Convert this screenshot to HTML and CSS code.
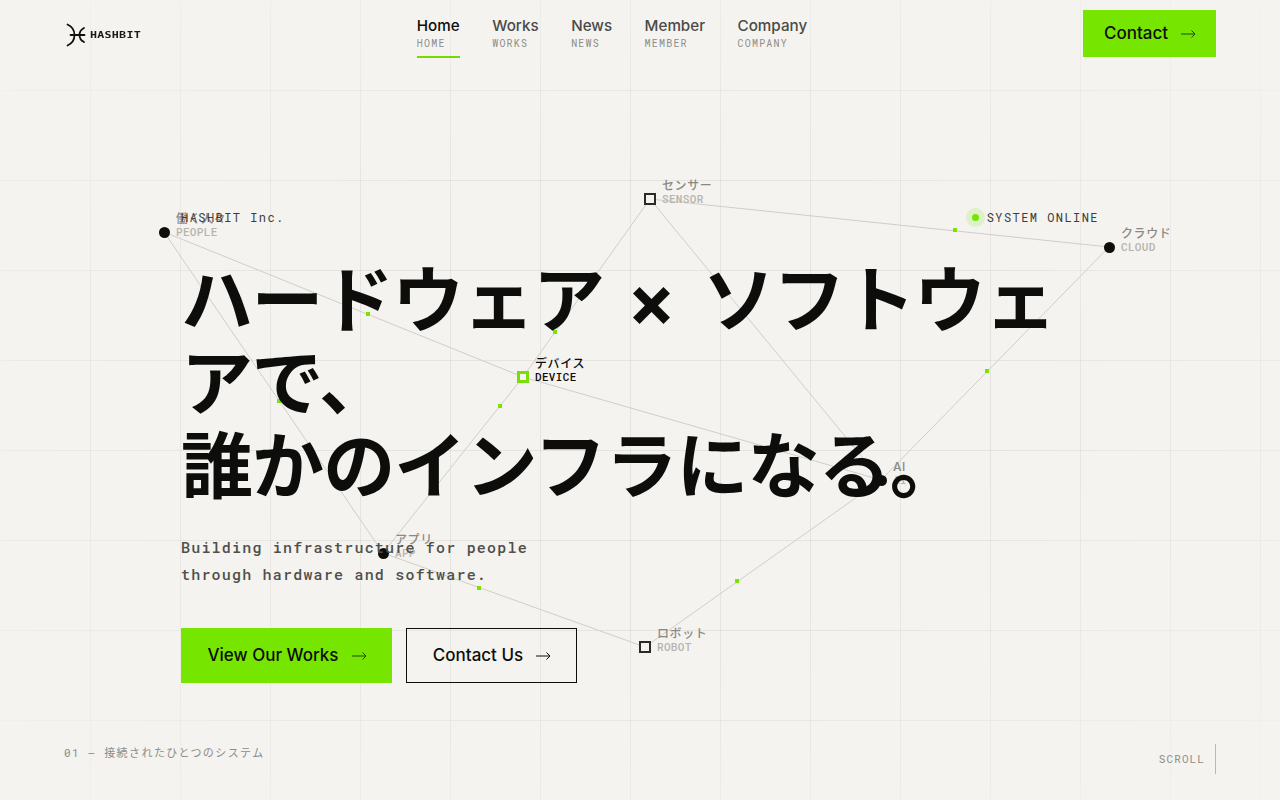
FILE: index.html
```html
<!DOCTYPE html>
<html lang="ja">
<head>
<meta charset="utf-8">
<title>HASHBIT Inc.</title>
<link rel="stylesheet" href="styles.css">
</head>
<body>
<div class="page">
  <div class="grid-bg"></div>

  <div class="diagram">
    <svg class="links" width="1280" height="800" viewBox="0 0 1280 800">
      <g class="link">
        <line x1="164" y1="232" x2="523" y2="377"/>
        <line x1="164" y1="232" x2="383" y2="553"/>
        <line x1="650" y1="199" x2="523" y2="377"/>
        <line x1="650" y1="199" x2="881" y2="480"/>
        <line x1="650" y1="199" x2="1109" y2="247"/>
        <line x1="1109" y1="247" x2="881" y2="480"/>
        <line x1="523" y1="377" x2="881" y2="480"/>
        <line x1="523" y1="377" x2="383" y2="553"/>
        <line x1="383" y1="553" x2="645" y2="647"/>
        <line x1="881" y1="480" x2="645" y2="647"/>
      </g>
      <g class="packet">
        <rect x="366" y="312" width="4" height="4"/>
        <rect x="277" y="399" width="4" height="4"/>
        <rect x="553" y="330" width="4" height="4"/>
        <rect x="725" y="291" width="4" height="4"/>
        <rect x="953" y="228" width="4" height="4"/>
        <rect x="985" y="369" width="4" height="4"/>
        <rect x="498" y="404" width="4" height="4"/>
        <rect x="477" y="586" width="4" height="4"/>
        <rect x="735" y="579" width="4" height="4"/>
      </g>
    </svg>

    <div class="node n-people"><i class="dot"></i><div class="label"><b>働く人々</b><span>PEOPLE</span></div></div>
    <div class="node n-sensor"><i class="box"></i><div class="label"><b>センサー</b><span>SENSOR</span></div></div>
    <div class="node n-cloud"><i class="dot"></i><div class="label"><b>クラウド</b><span>CLOUD</span></div></div>
    <div class="node n-device active"><i class="box"></i><div class="label"><b>デバイス</b><span>DEVICE</span></div></div>
    <div class="node n-ai"><i class="dot"></i><div class="label"><b>AI</b><span>AI</span></div></div>
    <div class="node n-app"><i class="dot"></i><div class="label"><b>アプリ</b><span>APP</span></div></div>
    <div class="node n-robot"><i class="box"></i><div class="label"><b>ロボット</b><span>ROBOT</span></div></div>
  </div>

  <header class="site-header">
    <a class="logo" href="#">
      <svg class="logo-mark" width="20" height="24" viewBox="0 0 20 24" fill="none">
        <path d="M1.500 1.500C7 4 8.500 8 8.500 12s-1.500 8-7 10.500" />
        <path d="M18 5C15 6.500 13.500 9 13.500 12s1.500 5.500 4.500 7" />
        <path d="M4.500 12H18.500" />
      </svg>
      <span class="logo-text">HASHBIT</span>
    </a>
    <nav class="nav">
      <a class="nav-item current" href="#"><strong>Home</strong><small>HOME</small></a>
      <a class="nav-item" href="#"><strong>Works</strong><small>WORKS</small></a>
      <a class="nav-item" href="#"><strong>News</strong><small>NEWS</small></a>
      <a class="nav-item" href="#"><strong>Member</strong><small>MEMBER</small></a>
      <a class="nav-item" href="#"><strong>Company</strong><small>COMPANY</small></a>
    </nav>
    <a class="btn btn-contact" href="#">Contact
      <svg class="arrow" width="14" height="10" viewBox="0 0 14 10" fill="none"><path d="M0 5H14M10.500 1.500l3.500 3.500-3.500 3.500"/></svg>
    </a>
  </header>

  <main class="hero">
    <div class="hero-meta">
      <span>HASHBIT Inc.</span>
      <span class="status"><i class="status-dot"></i>SYSTEM ONLINE</span>
    </div>
    <h1 class="headline">ハードウェア<span class="times"> × </span>ソフトウェアで、<br><span class="line-b">誰かのインフラになる。</span></h1>
    <p class="lead">Building infrastructure for people<br>through hardware and software.</p>
    <div class="actions">
      <a class="btn btn-primary" href="#">View Our Works
        <svg class="arrow" width="14" height="10" viewBox="0 0 14 10" fill="none"><path d="M0 5H14M10.500 1.500l3.500 3.500-3.500 3.500"/></svg>
      </a>
      <a class="btn btn-outline" href="#">Contact Us
        <svg class="arrow" width="14" height="10" viewBox="0 0 14 10" fill="none"><path d="M0 5H14M10.500 1.500l3.500 3.500-3.500 3.500"/></svg>
      </a>
    </div>
  </main>

  <footer class="hero-foot">
    <span class="caption">01 — 接続されたひとつのシステム</span>
    <span class="scroll">SCROLL</span>
  </footer>
</div>
</body>
</html>
```

FILE: styles.css
```css
* { box-sizing: border-box; }
html, body { margin: 0; padding: 0; }
body {
  background: #f4f3ef;
  color: #0d0d0b;
  font-family: Inter, "Noto Sans CJK JP", sans-serif;
}
a { color: inherit; text-decoration: none; }

.page {
  position: relative;
  width: 1280px;
  height: 800px;
  overflow: hidden;
  display: flex;
  flex-direction: column;
}

.grid-bg {
  position: absolute;
  inset: 1px 0 0 1px;
  background-image:
    linear-gradient(to right, transparent 89px, rgba(0,0,0,.06) 89px),
    linear-gradient(to bottom, transparent 89px, rgba(0,0,0,.06) 89px);
  background-size: 90px 90px;
  -webkit-mask-image: radial-gradient(ellipse 70% 70% at 50% 50%, #000 40%, transparent 110%);
  mask-image: radial-gradient(ellipse 70% 70% at 50% 50%, #000 40%, transparent 110%);
}

/* free-canvas network diagram */
.diagram { position: absolute; inset: 0; }
.links { position: absolute; left: 0; top: 0; }
.link line { stroke: #cfcec9; stroke-width: 1; }
.packet rect { fill: #76e600; }

.node { position: absolute; width: 0; height: 0; }
.node .dot {
  position: absolute; left: -5.500px; top: -5.500px;
  width: 11px; height: 11px; border-radius: 50%; background: #0d0d0b;
}
.node .box {
  position: absolute; left: -6px; top: -6px;
  width: 12px; height: 12px; background: #f4f3ef; border: 2px solid #2a2a28;
}
.label {
  position: absolute; left: 12px; top: -21px;
  display: flex; flex-direction: column; white-space: nowrap;
}
.label b {
  font: 500 12px/15px Inter, "Noto Sans CJK JP", sans-serif;
  letter-spacing: .05em; color: #8a8985;
}
.label span {
  font: 500 11px/11px "Roboto Mono", monospace;
  letter-spacing: .03em; color: #b4b3ae;
}
.active .box { border: 3px solid #7cdc0a; }
.active .label b, .active .label span { color: #0d0d0b; }

.n-people { left: 164px; top: 232px; }
.n-sensor { left: 650px; top: 199px; }
.n-cloud  { left: 1109px; top: 247px; }
.n-device { left: 523px; top: 377px; }
.n-ai     { left: 881px; top: 480px; }
.n-app    { left: 383px; top: 553px; }
.n-robot  { left: 645px; top: 647px; }

/* header */
.site-header {
  position: relative;
  display: flex;
  justify-content: space-between;
  align-items: flex-start;
  padding: 10px 64px 0;
}
.logo {
  display: flex; align-items: center; gap: 4px;
  width: 77px; margin-top: 13px; padding-left: 2px;
}
.logo-mark { flex: none; }
.logo-mark path { stroke: #111; stroke-width: 1.800; stroke-linecap: round; }
.logo-text {
  font: 700 9px/1 "DejaVu Sans Mono", monospace;
  letter-spacing: .02em; color: #1a1a18;
  transform: scaleX(1.3); transform-origin: left;
}
.nav { display: flex; gap: 32.500px; }
.nav-item {
  display: flex; flex-direction: column;
  height: 48px; padding-top: 6px;
  border-bottom: 2px solid transparent;
  color: #4a4a47;
}
.nav-item strong { font: 500 15.200px/20px Inter, sans-serif; }
.nav-item small {
  font: 400 10px/14px "Roboto Mono", monospace;
  letter-spacing: .12em; color: #8e8d88; margin-top: 1px;
}
.nav-item.current { color: #0d0d0b; border-bottom-color: #76d900; }

.btn {
  display: inline-flex; align-items: center; justify-content: center;
  font: 500 17px/1 Inter, sans-serif; color: #0d0d0b;
}
.arrow path { stroke: currentColor; stroke-width: 1; }
.btn-contact {
  width: 133px; height: 47px; gap: 13px;
  background: #76e600;
}
.btn-contact .arrow, .btn-primary .arrow { color: #1f4a00; }

/* hero */
.hero {
  position: relative;
  align-self: center;
  width: 918px;
  padding-top: 152px;
}
.hero-meta {
  display: flex; justify-content: space-between; align-items: center;
  font: 400 12px/14px "Roboto Mono", monospace;
  letter-spacing: .12em; color: #3d3d3a;
}
.status { display: flex; align-items: center; gap: 8px; }
.status-dot {
  width: 7px; height: 7px; border-radius: 50%;
  background: #76e600;
  box-shadow: 0 0 0 6px rgba(118,230,0,.16);
}
.headline {
  margin: 35px 0 0;
  font: 700 72px/82.800px Inter, "Noto Sans CJK JP", sans-serif;
  letter-spacing: -.022em;
  color: #0d0d0b;
}
.times { margin: 0 13px 0 8px; }
.line-b { letter-spacing: -.0125em; }
.lead {
  margin: 27px 0 0;
  font: 500 15px/27px "Roboto Mono", monospace;
  letter-spacing: .08em; color: #4f4f4c;
}
.actions { display: flex; gap: 14px; margin-top: 40px; }
.btn-primary { width: 211px; height: 55px; gap: 13px; background: #76e600; }
.btn-outline { width: 171px; height: 55px; gap: 13px; border: 1px solid #0d0d0b; }

/* foot */
.hero-foot {
  position: absolute; left: 64px; right: 64px; bottom: 26px;
  display: flex; justify-content: space-between; align-items: flex-end;
}
.caption {
  font: 400 11px/14px "Roboto Mono", "Noto Sans CJK JP", monospace;
  letter-spacing: .13em; color: #8e8d88; margin-bottom: 14px;
}
.scroll {
  display: flex; align-items: center; height: 30px;
  padding-right: 10px; border-right: 1px solid #b9b8b3;
  font: 400 11px/14px "Roboto Mono", monospace;
  letter-spacing: .1em; color: #8e8d88;
}
```
